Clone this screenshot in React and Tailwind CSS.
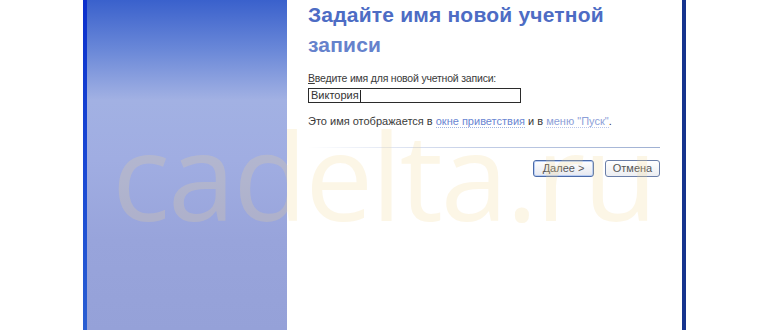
export default function App() {
  return (
    <div className="relative w-[770px] h-[330px] bg-white flex overflow-hidden" style={{ fontFamily: '"Liberation Sans", Arial, sans-serif' }}>
      <div className="w-[83px] shrink-0" />
      <div className="w-[4px] shrink-0 bg-gradient-to-b from-[#0b2fcc] via-[#1a48d4] to-[#2a5ed2]" />
      <div className="w-[200px] shrink-0 bg-[linear-gradient(to_bottom,#3a61cc_0px,#6a88d8_50px,#a2b1e3_100px,#a0ade2_160px,#98a4db_240px,#95a1d8_330px)]" />
      <div className="w-[395px] shrink-0 flex flex-col pl-[21px] pr-[21px]">
        <div className="text-[21px] leading-[30px] font-bold text-[#4d6cc4] tracking-[0.2px]">
          <div>Задайте имя новой учетной</div>
          <div className="text-[#6582cc]">записи</div>
        </div>
        <div className="mt-[11px] text-[10.5px] tracking-[-0.2px] leading-[14px] text-[#3a3a3a]">
          <span className="underline">В</span>ведите имя для новой учетной записи:
        </div>
        <div className="mt-[3px] w-[213px] h-[15px] border border-[#2b2b2b] flex items-center pl-[2px] text-[11px] text-[#333]">
          Виктория<span className="inline-block w-px h-[12px] bg-[#222] ml-px" />
        </div>
        <div className="mt-[11px] text-[11px] leading-[14px] text-[#3a3a3a]">
          Это имя отображается в{' '}
          <span className="text-[#6a86d2] border-b border-dotted border-[#9fb2e0]">окне приветствия</span>{' '}
          и в{' '}
          <span className="text-[#8d9fd8] border-b border-dotted border-[#b8c5ea]">меню "Пуск"</span>.
        </div>
        <div className="mt-[19px] h-px w-[352px] bg-gradient-to-r from-[#ffffff] via-[#c2cde6] to-[#9fb0d2]" />
        <div className="mt-[12px] flex justify-end gap-[11px] pr-[1px] w-[353px]">
          <div className="w-[61px] h-[17px] rounded-[3px] border border-[#4a6aa8] bg-gradient-to-b from-[#ffffff] to-[#e6e8f0] shadow-[inset_0_0_0_1px_#b8cdf4] flex items-center justify-center text-[11px] text-[#555]">
            <span><span className="underline">Д</span>алее &gt;</span>
          </div>
          <div className="w-[55px] h-[17px] rounded-[3px] border border-[#6a7ea8] bg-gradient-to-b from-[#ffffff] to-[#eceef2] flex items-center justify-center text-[11px] text-[#555]">
            Отмена
          </div>
        </div>
      </div>
      <div className="w-[4px] shrink-0 bg-[#16348e]" />
      <div className="flex-1" />
      <div
        className="pointer-events-none absolute left-[112px] top-[114px] text-[121px] leading-none font-normal text-[#f5d890] opacity-[0.22] tracking-[-2px]"
        style={{ fontFamily: '"Open Sans", sans-serif' }}
      >
        cadelta.ru
      </div>
    </div>
  );
}
